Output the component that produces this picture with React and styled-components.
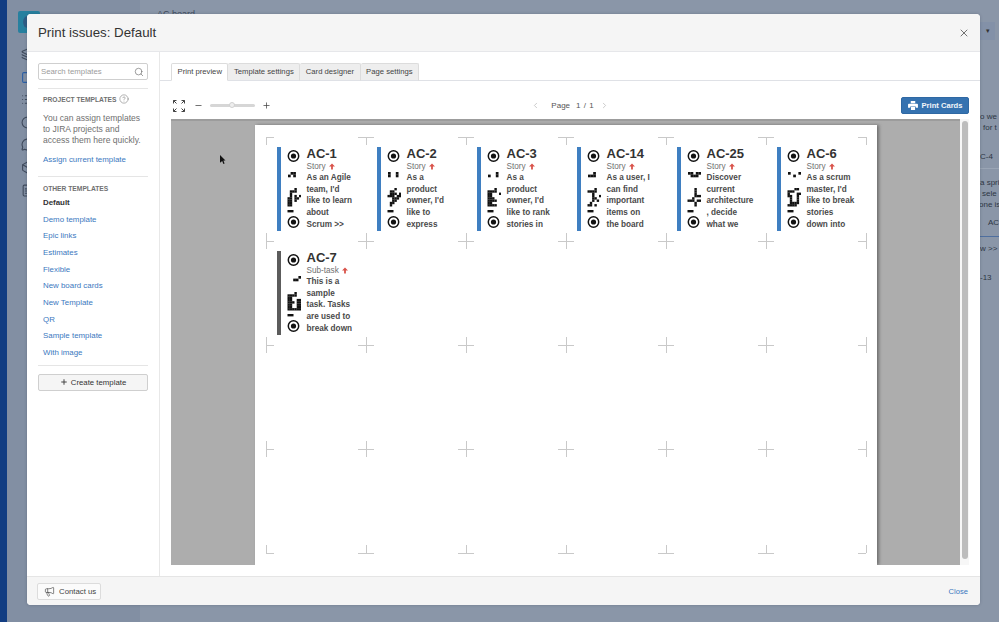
import React from 'react';
import styled, { createGlobalStyle } from 'styled-components';
import {
  Search,
  CircleHelp,
  X,
  Plus,
  Minus,
  ChevronLeft,
  ChevronRight,
  Megaphone,
  Layers,
  Square,
  List,
  Clock,
  MessageCircle,
  Box,
  FileText,
} from 'lucide-react';

const GlobalStyle = createGlobalStyle`
  html, body {
    margin: 0;
    padding: 0;
    background: #8a96a8;
    font-family: "Liberation Sans", Arial, sans-serif;
  }
`;

const templates = [
  'Demo template',
  'Epic links',
  'Estimates',
  'Flexible',
  'New board cards',
  'New Template',
  'QR',
  'Sample template',
  'With image',
];

const tabs = ['Print preview', 'Template settings', 'Card designer', 'Page settings'];

const cards = [
  {
    id: 'AC-1',
    type: 'Story',
    lines: ['As an Agile', "team, I'd", 'like to learn', 'about', 'Scrum >>'],
    small: ['.##', '#.#'],
    large: ['...#..', '.###..', '.#....', '.#.#.#', '##.##.', '##.#..', '##....', '##....'],
  },
  {
    id: 'AC-2',
    type: 'Story',
    lines: ['As a', 'product', "owner, I'd", 'like to', 'express'],
    small: ['#..#', '#..#'],
    large: ['...#..', '.##...', '.###.#', '###.##', '..###.', '..##..', '.##...', '.#....'],
  },
  {
    id: 'AC-3',
    type: 'Story',
    lines: ['As a', 'product', "owner, I'd", 'like to rank', 'stories in'],
    small: ['...#', '#..#'],
    large: ['...#..', '####..', '##...#', '##....', '###...', '####..', '##....', '####..'],
  },
  {
    id: 'AC-14',
    type: 'Story',
    lines: ['As a user, I', 'can find', 'important', 'items on', 'the board'],
    small: ['..#', '###'],
    large: ['...#..', '####..', '..#...', '..#..#', '..##..', '..#.#.', '.#....', '##.#..'],
  },
  {
    id: 'AC-25',
    type: 'Story',
    lines: ['Discover', 'current', 'architecture', ', decide', 'what we'],
    small: ['##.##', '.###.'],
    large: ['...#..', '...#..', '...#..', '...###', '..#...', '###.##', '...#..', '...#..'],
  },
  {
    id: 'AC-6',
    type: 'Story',
    lines: ['As a scrum', "master, I'd", 'like to break', 'stories', 'down into'],
    small: ['#...#', '..#..'],
    large: ['...##.', '###...', '#...##', '##..#.', '.#..#.', '.#..#.', '.####.', '####..'],
  },
  {
    id: 'AC-7',
    type: 'Sub-task',
    sub: true,
    lines: ['This is a', 'sample', 'task. Tasks', 'are used to', 'break down'],
    small: ['....#', '..##.'],
    large: ['...#..', '####..', '##....', '##..##', '###.##', '##..##', '##..##', '######'],
  },
];

// Renders rows of '#' as the little black squares of the card code
const Cells = ({ rows, x, y, size }) =>
  rows.flatMap((row, r) =>
    row.split('').map((c, i) =>
      c === '#' ? (
        <rect key={`${r}-${i}`} x={x + i * size} y={y + r * size} width={size + 0.1} height={size + 0.1} fill="#111" />
      ) : null
    )
  );

const Target = ({ cy }) => (
  <>
    <circle cx="7.5" cy={cy} r="5.2" fill="none" stroke="#111" strokeWidth="1.5" />
    <circle cx="7.5" cy={cy} r="2.6" fill="#111" />
  </>
);

const CardCode = ({ small, large }) => (
  <CodeSvg viewBox="0 0 15 84" width="15" height="84">
    <Target cy={9} />
    <Cells rows={small} x={2} y={25} size={2.6} />
    <Cells rows={large} x={1.5} y={41} size={2.3} />
    <rect x="1.5" y="63" width="6" height="2.4" fill="#111" />
    <Target cy={75} />
  </CodeSvg>
);

// Crop marks for the whole sheet, offsets are sheet coordinates
const cropMarks = () => {
  const xs = [11, 111, 211, 311, 411, 511, 611];
  const ys = [12, 116, 220, 324, 428];
  let d = '';
  xs.forEach((x, xi) => {
    ys.forEach((y, yi) => {
      const left = xi === 0 ? 0 : 8;
      const right = xi === xs.length - 1 ? 0 : 8;
      const up = yi === 0 ? 0 : 8;
      const down = yi === ys.length - 1 ? 0 : 8;
      d += `M${x - left} ${y + 0.5}H${x + right}M${x + 0.5} ${y - up}V${y + down}`;
    });
  });
  return d;
};

const PriorityArrow = () => (
  <svg width="6" height="7" viewBox="0 0 6 7">
    <path d="M3 0.5 L6 3.4 H3.9 V6.5 H2.1 V3.4 H0 Z" fill="#d9534a" />
  </svg>
);

const PrinterIcon = () => (
  <svg width="10" height="9" viewBox="0 0 11 10">
    <path
      d="M3 0h5v2.5H3zM1 3h9a1 1 0 0 1 1 1v3.5H8.6V6H2.4v1.5H0V4a1 1 0 0 1 1-1zM3.2 6.8h4.6V10H3.2z"
      fill="#fff"
    />
  </svg>
);

const FullscreenIcon = () => (
  <svg width="12" height="12" viewBox="0 0 12 12" fill="none" stroke="#444" strokeWidth="1">
    <path d="M0.5 3.5v-3h3M0.5 0.5l3 3M11.5 3.5v-3h-3M11.5 0.5l-3 3M0.5 8.5v3h3M0.5 11.5l3-3M11.5 8.5v3h-3M11.5 11.5l-3-3" />
  </svg>
);

const App = () => (
  <>
    <GlobalStyle />
    <Page>
      <BlueStrip />
      <BackNav>
        <Logo>
          <LogoMark />
        </Logo>
        <BackIcons>
          <Layers size={13} />
          <Square size={13} color="#2b5fa5" />
          <List size={13} />
          <Clock size={13} />
          <MessageCircle size={13} />
          <Box size={13} />
          <FileText size={13} />
        </BackIcons>
      </BackNav>
      <BackMain>
        <BoardTitle>AC board</BoardTitle>
        <BackAside>
          <DropBox>▾</DropBox>
          <AsideText $top={71} $indent={5}>o we</AsideText>
          <AsideText $indent={8}>for t</AsideText>
          <AsideText $top={18} $indent={5}>C-4</AsideText>
          <AsideLine $top={6} />
          <AsideText $top={8} $indent={5}>a spri</AsideText>
          <AsideText $indent={7}>sele</AsideText>
          <AsideText $indent={4}>one is</AsideText>
          <AsideText $top={7} $indent={13}>AC</AsideText>
          <AsideLine $top={7.5} $blue />
          <AsideText $top={6.5} $indent={5}>w &gt;&gt;</AsideText>
          <AsideText $top={17.5} $indent={5}>-13</AsideText>
        </BackAside>
      </BackMain>

      <Modal>
        <ModalHeader>
          <ModalTitle>Print issues: Default</ModalTitle>
          <CloseX size={12} strokeWidth={1.5} />
        </ModalHeader>
        <ModalBody>
          <Sidebar>
            <SearchBox>
              <span>Search templates</span>
              <Search size={10} strokeWidth={1.5} color="#666" />
            </SearchBox>
            <Divider $gap={8} />
            <GroupTitle $top={5}>
              PROJECT TEMPLATES <CircleHelp size={10} strokeWidth={1.2} color="#666" />
            </GroupTitle>
            <Hint>You can assign templates to JIRA projects and access them here quickly.</Hint>
            <AssignLink>Assign current template</AssignLink>
            <Divider $gap={12} />
            <GroupTitle $top={6}>OTHER TEMPLATES</GroupTitle>
            <TemplateList>
              <TemplateItem $active>Default</TemplateItem>
              {templates.map((name) => (
                <TemplateItem key={name}>{name}</TemplateItem>
              ))}
            </TemplateList>
            <Divider $gap={3} />
            <CreateButton>
              <Plus size={8} strokeWidth={3} color="#444" /> Create template
            </CreateButton>
          </Sidebar>
          <Content>
            <TabBar>
              {tabs.map((tab, i) => (
                <Tab key={tab} $active={i === 0}>
                  {tab}
                </Tab>
              ))}
            </TabBar>
            <Toolbar>
              <ZoomTools>
                <FullscreenIcon />
                <Minus size={9} color="#444" />
                <Slider>
                  <Knob />
                </Slider>
                <Plus size={9} color="#444" />
              </ZoomTools>
              <Pager>
                <ChevronLeft size={9} color="#bbb" />
                <PageLabel>Page</PageLabel>
                <PageCount>1 / 1</PageCount>
                <ChevronRight size={9} color="#bbb" />
              </Pager>
              <PrintButton>
                <PrinterIcon /> Print Cards
              </PrintButton>
            </Toolbar>
            <Preview>
              <GrayArea>
                <Pointer width="6" height="9" viewBox="0 0 6 9">
                  <path d="M0 0 L5.5 5.5 H3.4 L4.6 8.4 L3.4 9 L2.2 6 L0 7.8 Z" fill="#111" />
                </Pointer>
                <Sheet>
                  <Marks width="622" height="440">
                    <path d={cropMarks()} stroke="#c9c9c9" strokeWidth="1" fill="none" />
                  </Marks>
                  <CardGrid>
                    {cards.map((card) => (
                      <Card key={card.id}>
                        <CardBar $sub={card.sub} />
                        <CardCode small={card.small} large={card.large} />
                        <CardText>
                          <CardKey>{card.id}</CardKey>
                          <CardType>
                            {card.type} <PriorityArrow />
                          </CardType>
                          {card.lines.map((line) => (
                            <CardLine key={line}>{line}</CardLine>
                          ))}
                        </CardText>
                      </Card>
                    ))}
                  </CardGrid>
                </Sheet>
              </GrayArea>
              <ScrollTrack>
                <ScrollThumb />
              </ScrollTrack>
            </Preview>
          </Content>
        </ModalBody>
        <ModalFooter>
          <ContactButton>
            <Megaphone size={11} strokeWidth={1.4} color="#444" /> Contact us
          </ContactButton>
          <FooterClose>Close</FooterClose>
        </ModalFooter>
      </Modal>
    </Page>
  </>
);

const Page = styled.div`
  position: relative;
  display: flex;
  width: 999px;
  height: 622px;
  overflow: hidden;
  background: #8a96a8;
`;

const BlueStrip = styled.div`
  width: 7px;
  background: #123d82;
`;

const BackNav = styled.div`
  width: 133px;
  background: #828fa3;
  padding: 11px 0 0 11px;
  box-sizing: border-box;
`;

const Logo = styled.div`
  display: flex;
  align-items: center;
  justify-content: center;
  width: 22px;
  height: 22px;
  background: #27809f;
  border-radius: 2px;
`;

const LogoMark = styled.div`
  width: 9px;
  height: 12px;
  margin-left: -3px;
  border-radius: 50%;
  background: #2f5d86;
`;

const BackIcons = styled.div`
  display: flex;
  flex-direction: column;
  gap: 9.6px;
  margin-top: 15px;
  margin-left: 3px;
  color: #3f4a5c;
`;

const BackMain = styled.div`
  position: relative;
  flex: 1;
  display: flex;
  justify-content: space-between;
`;

const BoardTitle = styled.div`
  margin: 9px 0 0 17px;
  font-size: 9px;
  color: #3f4a5c;
`;

const BackAside = styled.div`
  width: 24px;
  padding-top: 22px;
  font-size: 8px;
  color: #2e3644;
  white-space: nowrap;
`;

const DropBox = styled.div`
  width: 15px;
  height: 18px;
  margin-left: 5px;
  background: #8391a8;
  font-size: 7px;
  line-height: 18px;
  text-align: center;
  color: #333;
`;

const AsideText = styled.div`
  margin-top: ${({ $top }) => $top || 0}px;
  margin-left: ${({ $indent }) => $indent || 0}px;
  line-height: 11px;
`;

const AsideLine = styled.div`
  height: 1px;
  margin-top: ${({ $top }) => $top}px;
  background: ${({ $blue }) => ($blue ? '#4f6f9f' : '#9aa5b5')};
`;

const Modal = styled.div`
  position: absolute;
  left: 27px;
  top: 14px;
  width: 953px;
  height: 591px;
  display: flex;
  flex-direction: column;
  background: #fff;
  border-radius: 4px;
  overflow: hidden;
  box-shadow: 0 0 3px rgba(40, 50, 70, 0.3);
`;

const ModalHeader = styled.div`
  flex: none;
  display: flex;
  align-items: center;
  justify-content: space-between;
  height: 37px;
  padding: 0 10px 0 11px;
  background: #f5f5f5;
  border-bottom: 1px solid #e6e7ea;
`;

const ModalTitle = styled.h1`
  margin: 0;
  font-size: 13.3px;
  font-weight: 400;
  color: #333;
`;

const CloseX = styled(X)`
  color: #444;
`;

const ModalBody = styled.div`
  flex: 1;
  display: flex;
  min-height: 0;
`;

const Sidebar = styled.aside`
  flex: none;
  width: 133px;
  box-sizing: border-box;
  padding: 11px 11px 0;
  border-right: 1px solid #e8e8e8;
`;

const SearchBox = styled.div`
  display: flex;
  align-items: center;
  justify-content: space-between;
  height: 17px;
  box-sizing: border-box;
  padding: 0 3px 0 2px;
  border: 1px solid #cfcfcf;
  border-radius: 2px;
  font-size: 7.8px;
  color: #9b9b9b;
`;

const Divider = styled.div`
  height: 1px;
  margin-top: ${({ $gap }) => $gap}px;
  background: #e5e5e5;
`;

const GroupTitle = styled.div`
  display: flex;
  align-items: center;
  gap: 3px;
  height: 10px;
  margin: ${({ $top }) => $top}px 0 0 5px;
  font-size: 6.7px;
  font-weight: 700;
  color: #707070;
`;

const Hint = styled.p`
  margin: 9px 0 0 5px;
  font-size: 8.55px;
  line-height: 11px;
  color: #707070;
`;

const AssignLink = styled.div`
  margin: 9px 0 0 5px;
  height: 9px;
  line-height: 9px;
  font-size: 7.9px;
  color: #3b78c0;
`;

const TemplateList = styled.div`
  display: flex;
  flex-direction: column;
  margin: 2px 0 0 5px;
`;

const TemplateItem = styled.div`
  height: 16.67px;
  line-height: 16.67px;
  font-size: 7.9px;
  font-weight: ${({ $active }) => ($active ? 700 : 400)};
  color: ${({ $active }) => ($active ? '#333' : '#3b78c0')};
`;

const CreateButton = styled.button`
  display: flex;
  align-items: center;
  justify-content: center;
  gap: 3px;
  width: 110px;
  height: 17px;
  margin-top: 8px;
  padding: 0;
  background: #f5f5f5;
  border: 1px solid #cfcfcf;
  border-radius: 2px;
  font: 400 7.8px "Liberation Sans", Arial, sans-serif;
  color: #333;
`;

const Content = styled.main`
  flex: 1;
  min-width: 0;
  padding-top: 11px;
`;

const TabBar = styled.div`
  display: flex;
  height: 18px;
  box-sizing: border-box;
  padding-left: 11px;
  border-bottom: 1px solid #dfe1e6;
`;

const Tab = styled.div`
  height: 18px;
  box-sizing: border-box;
  padding: 0 5.5px;
  line-height: 16px;
  font-size: 7.7px;
  color: #444;
  background: ${({ $active }) => ($active ? '#fff' : '#eeeeee')};
  border: 1px solid #dcdcdc;
  border-left-width: ${({ $active }) => ($active ? 1 : 0)}px;
  border-bottom-color: ${({ $active }) => ($active ? '#fff' : '#dfe1e6')};
  border-radius: 2px 2px 0 0;
`;

const Toolbar = styled.div`
  display: grid;
  grid-template-columns: 1fr auto 1fr;
  align-items: center;
  height: 38px;
  box-sizing: border-box;
  padding-top: 16px;
  padding-bottom: 5px;
  margin: 0 11px;
`;

const ZoomTools = styled.div`
  display: flex;
  align-items: center;
  gap: 7px;
  margin-left: 2px;
  & > svg:first-child {
    margin-right: 2px;
  }
`;

const Slider = styled.div`
  position: relative;
  width: 45px;
  height: 3px;
  border-radius: 2px;
  background: #d6d6d6;
`;

const Knob = styled.div`
  position: absolute;
  left: 19px;
  top: -2px;
  width: 6px;
  height: 6px;
  border-radius: 50%;
  background: #eee;
  border: 1px solid #d0d0d0;
  box-sizing: border-box;
`;

const Pager = styled.div`
  display: flex;
  align-items: center;
  gap: 6px;
  font-size: 8px;
  color: #555;
`;

const PageLabel = styled.span`
  margin-left: 5px;
`;

const PageCount = styled.span`
  word-spacing: 1px;
`;

const PrintButton = styled.button`
  justify-self: end;
  display: flex;
  align-items: center;
  justify-content: center;
  gap: 4px;
  width: 68px;
  height: 17px;
  padding: 0;
  background: #3572b0;
  border: 1px solid #2f68a3;
  border-radius: 2px;
  font: 700 7.6px "Liberation Sans", Arial, sans-serif;
  color: #f2f5f9;
`;

const Preview = styled.div`
  display: flex;
  height: 446px;
  margin: 0 11px;
`;

const GrayArea = styled.div`
  position: relative;
  flex: 1;
  display: flex;
  justify-content: center;
  align-items: flex-start;
  padding-top: 4px;
  background: #adadad;
  border-top: 2px solid #9c9c9c;
  box-sizing: border-box;
  overflow: hidden;
`;

const Pointer = styled.svg`
  position: absolute;
  left: 49px;
  top: 34px;
`;

const Sheet = styled.div`
  position: relative;
  flex: none;
  width: 622px;
  height: 440px;
  background: #fff;
  box-shadow: 2px 0 3px rgba(60, 60, 60, 0.55);
`;

const Marks = styled.svg`
  position: absolute;
  inset: 0;
`;

const CardGrid = styled.div`
  position: relative;
  display: grid;
  grid-template-columns: repeat(6, 100px);
  grid-auto-rows: 84px;
  row-gap: 20px;
  padding: 22px 0 0 22px;
`;

const Card = styled.div`
  display: flex;
  height: 84px;
`;

const CardBar = styled.div`
  flex: none;
  width: 4px;
  margin-right: 5px;
  background: ${({ $sub }) => ($sub ? '#5c5c5c' : '#3f7fc1')};
`;

const CodeSvg = styled.svg`
  flex: none;
  margin-right: 6px;
`;

const CardText = styled.div`
  min-width: 0;
  white-space: nowrap;
`;

const CardKey = styled.div`
  height: 13px;
  line-height: 13px;
  font-size: 13px;
  font-weight: 700;
  color: #333;
`;

const CardType = styled.div`
  display: flex;
  align-items: center;
  gap: 3px;
  height: 12px;
  line-height: 11px;
  font-size: 8.2px;
  color: #707070;
`;

const CardLine = styled.div`
  height: 11.7px;
  line-height: 11.7px;
  font-size: 8.2px;
  font-weight: 700;
  color: #4a4a4a;
`;

const ScrollTrack = styled.div`
  flex: none;
  width: 9px;
  padding: 2px 1px 0 2px;
  box-sizing: border-box;
  background: #f7f7f7;
`;

const ScrollThumb = styled.div`
  height: 438px;
  border-radius: 3px;
  background: #bdbdbd;
`;

const ModalFooter = styled.footer`
  flex: none;
  display: flex;
  align-items: center;
  justify-content: space-between;
  height: 29px;
  box-sizing: border-box;
  padding: 0 12px 0 10px;
  background: #f5f5f5;
  border-top: 1px solid #e5e5e5;
`;

const ContactButton = styled.button`
  display: flex;
  align-items: center;
  gap: 4px;
  height: 17px;
  width: 64px;
  padding: 0 0 0 6px;
  background: #fbfbfb;
  border: 1px solid #dcdcdc;
  border-radius: 2px;
  font: 400 7.8px "Liberation Sans", Arial, sans-serif;
  color: #444;
`;

const FooterClose = styled.div`
  font-size: 7.6px;
  color: #3b78c0;
`;

export default App;
